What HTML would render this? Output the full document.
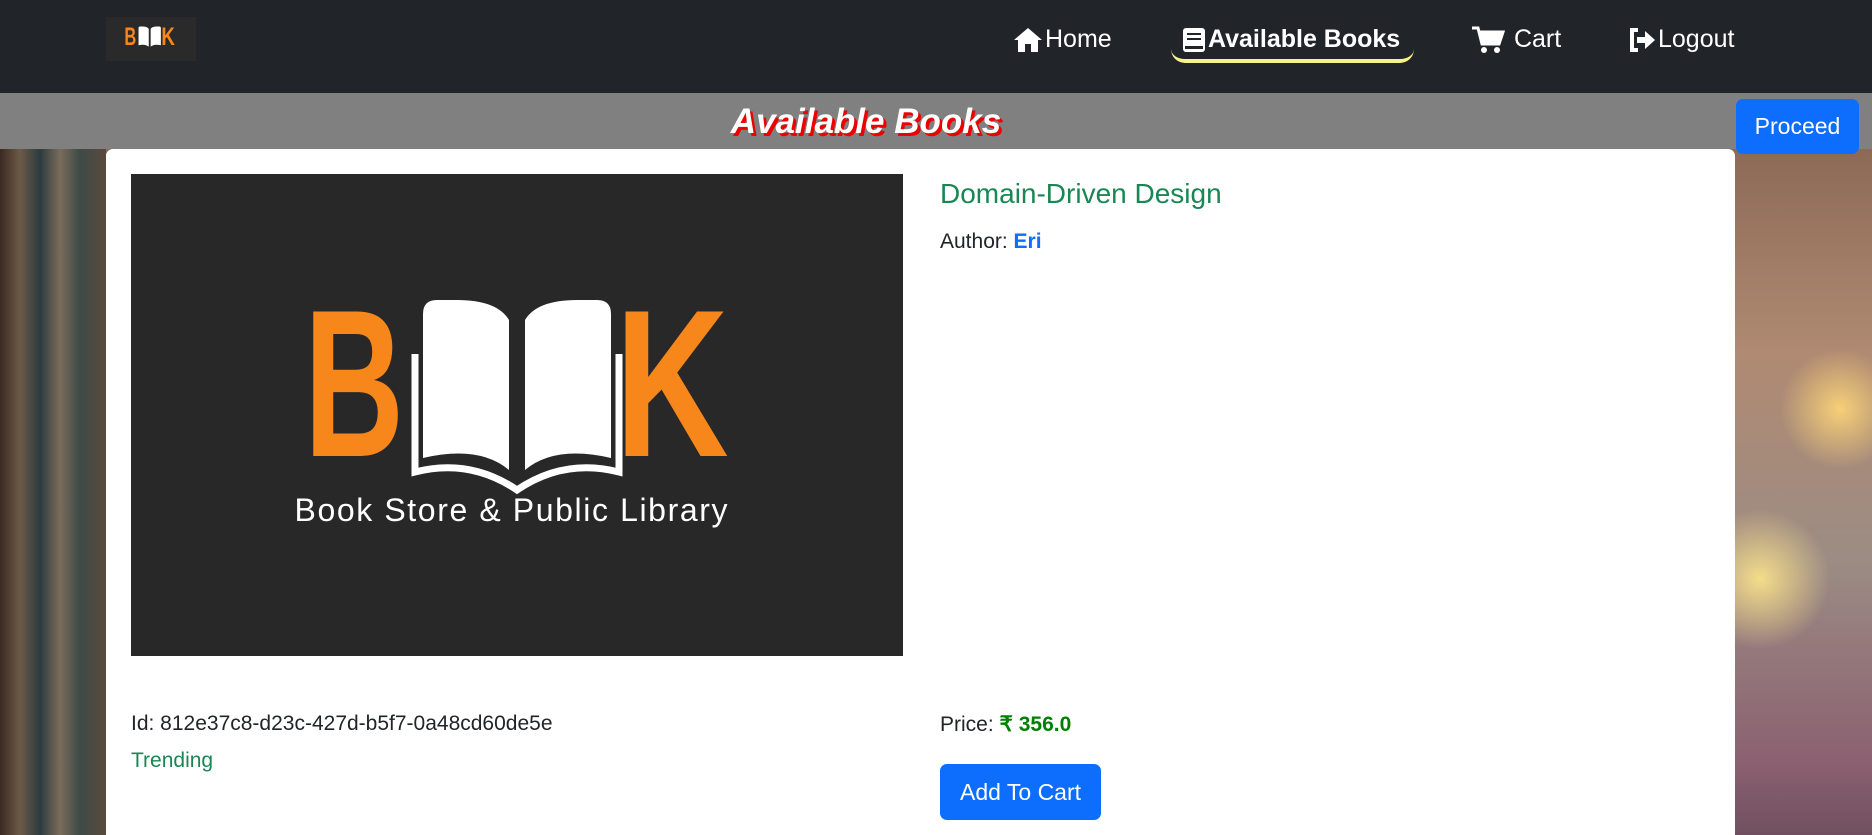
<!DOCTYPE html>
<html style="overflow:hidden;height:835px"><head><meta charset="utf-8"><style>
*{margin:0;padding:0;box-sizing:border-box}
body{width:1872px;height:835px;overflow:hidden;font-family:"Liberation Sans",sans-serif;position:relative;background:#6b5a4c}
.bg{position:absolute;left:0;top:149px;width:1872px;height:686px;background:
radial-gradient(circle at 1840px 260px,rgba(255,215,120,.9) 0,rgba(255,215,120,0) 60px),
radial-gradient(circle at 1760px 430px,rgba(255,230,140,.9) 0,rgba(255,230,140,0) 70px),
linear-gradient(180deg,#8c6a56 0%,#b08a72 30%,#9c8c84 60%,#8a6070 90%,#705060 100%)}
.shelf{position:absolute;left:0;top:149px;width:106px;height:686px;background:
linear-gradient(90deg,#3a2a20 0,#6d5a48 20px,#2c3b40 40px,#7a6c5a 60px,#3e4a48 80px,#5a4a3c 106px)}
.nav{position:absolute;left:0;top:0;width:1872px;height:93px;background:#212529}
.logo{position:absolute;left:106px;top:17px;width:90px;height:44px;background:#2a2a2a}
.ni{position:absolute;top:25px;color:#fff;font-size:25px;display:flex;align-items:center;gap:2px}
.pill{position:absolute;left:1171px;top:43px;width:243px;height:20px;border-bottom:4px solid #f7f28a;border-radius:0 0 14px 14px}
.band{position:absolute;left:0;top:93px;width:1872px;height:56px;background:#808080}
.title{position:absolute;left:0;width:1732px;top:102px;text-align:center;color:#fff;font-size:35px;font-weight:bold;font-style:italic;text-shadow:3px 3px 0 #e00}
.btn{position:absolute;background:#0d6efd;color:#fff;border-radius:7px;font-size:23px;display:flex;align-items:center;justify-content:center}
.card{position:absolute;left:106px;top:149px;width:1629px;height:686px;background:#fff;border-radius:7px 7px 0 0}
.img{position:absolute;left:131px;top:174px;width:772px;height:482px;background:#282828}
.t{position:absolute;font-size:21px;color:#212529}
</style></head><body>
<div class="bg"></div><div class="shelf"></div>
<div class="nav">
<div class="logo"><svg width="90" height="44" viewBox="0 0 772 482"><g transform="translate(-130,-60) scale(1.3)">
<text x="173" y="282" font-family="Liberation Sans" font-weight="bold" font-size="210" fill="#f7861b" transform="translate(173 0) scale(0.66 1) translate(-173 0)">B</text>
<text x="484" y="282" font-family="Liberation Sans" font-weight="bold" font-size="210" fill="#f7861b" transform="translate(484 0) scale(0.75 1) translate(-484 0)">K</text>
<path d="M292 140q0-14 14-14h20q40 0 52 20v150q-30-25-86-12z M480 140q0-14-14-14h-20q-40 0-52 20v150q30-25 86-12z" fill="#fff"/></g></svg></div>
<div class="ni" style="left:1013px"><svg width="30" height="26" viewBox="0 0 30 26"><path d="M15 1 1 13h4v12h7v-8h6v8h7V13h4z" fill="#fff"/></svg>Home</div>
<div class="pill"></div>
<div class="ni" style="left:1182px;font-weight:bold"><svg width="24" height="26" viewBox="0 0 24 26"><rect x="1" y="1" width="22" height="24" rx="3" fill="#fff"/><rect x="5" y="6" width="14" height="2" fill="#212529"/><rect x="5" y="11" width="14" height="2" fill="#212529"/><rect x="3" y="19" width="18" height="3" fill="#212529"/></svg>Available Books</div>
<div class="ni" style="left:1471px"><svg width="34" height="28" viewBox="0 0 34 28"><path d="M1 2h6l4 16h17l4-12H9" fill="none" stroke="#fff" stroke-width="3"/><path d="M9 6h23l-4 12H12z" fill="#fff"/><circle cx="13" cy="24" r="3" fill="#fff"/><circle cx="26" cy="24" r="3" fill="#fff"/></svg>&nbsp;Cart</div>
<div class="ni" style="left:1628px"><svg width="28" height="26" viewBox="0 0 28 26"><path d="M10 3H4v20h6" fill="none" stroke="#fff" stroke-width="4"/><path d="M9 10h8V4l10 9-10 9v-6H9z" fill="#fff"/></svg>Logout</div>
</div>
<div class="band"></div>
<div class="title">Available Books</div>
<div class="btn" style="left:1736px;top:99px;width:123px;height:55px">Proceed</div>
<div class="card"></div>
<div class="img"><svg width="772" height="482" viewBox="0 0 772 482">
<text x="173" y="282" font-family="Liberation Sans" font-weight="bold" font-size="210" fill="#f7861b" transform="translate(173 0) scale(0.66 1) translate(-173 0)">B</text>
<text x="484" y="282" font-family="Liberation Sans" font-weight="bold" font-size="210" fill="#f7861b" transform="translate(484 0) scale(0.75 1) translate(-484 0)">K</text>
<path d="M292 140q0-14 14-14h20q40 0 52 20v150q-30-25-86-12z M480 140q0-14-14-14h-20q-40 0-52 20v150q30-25 86-12z" fill="#fff"/>
<path d="M284 180v118q55-14 102 18q47-32 102-18V180" fill="none" stroke="#fff" stroke-width="7"/>
<text x="380" y="347" text-anchor="middle" font-family="Liberation Sans" font-size="32" fill="#fff" textLength="433">Book Store &amp; Public Library</text>
</svg></div>
<div class="t" style="left:940px;top:178px;font-size:28px;color:#198754">Domain-Driven Design</div>
<div class="t" style="left:940px;top:230px">Author: <b style="color:#0d6efd">Eri</b></div>
<div class="t" style="left:131px;top:712px">Id: 812e37c8-d23c-427d-b5f7-0a48cd60de5e</div>
<div class="t" style="left:131px;top:749px;color:#198754">Trending</div>
<div class="t" style="left:940px;top:712px">Price: <b style="color:#008000">₹ 356.0</b></div>
<div class="btn" style="left:940px;top:764px;width:161px;height:56px">Add To Cart</div>
</body></html>
